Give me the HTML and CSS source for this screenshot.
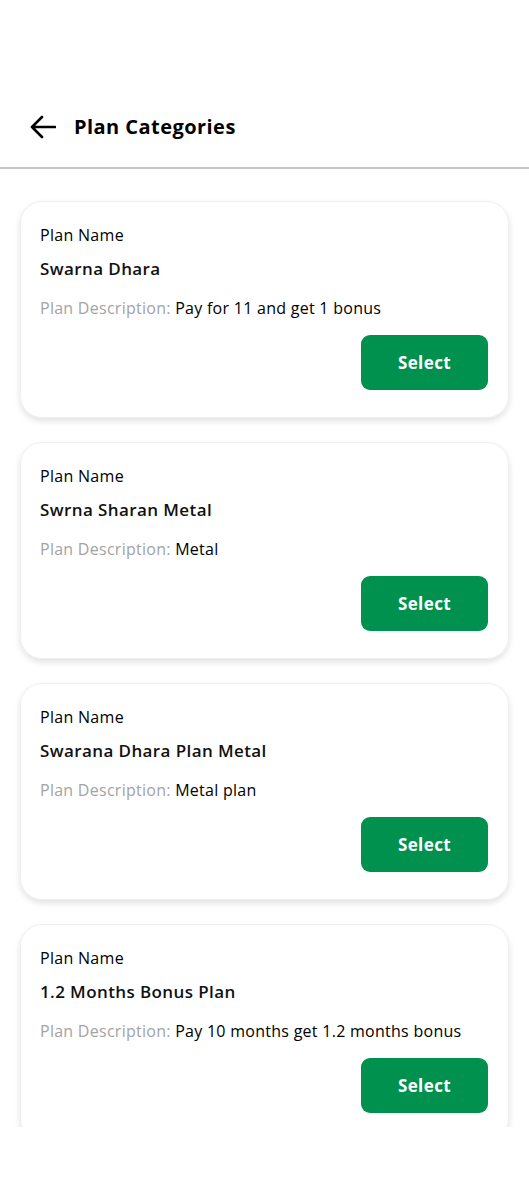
FILE: index.html
```html
<!DOCTYPE html>
<html>
<head>
<meta charset="utf-8">
<link rel="stylesheet" href="styles.css">
</head>
<body>
<div class="screen">
  <header class="header">
    <svg class="back" width="26" height="24" viewBox="0 0 26 24" fill="none" stroke="#000" stroke-width="2.6" stroke-linecap="round" stroke-linejoin="round">
      <path d="M25 12H2M12 2L2 12l10 10"/>
    </svg>
    <h1 class="title">Plan Categories</h1>
  </header>
  <main class="list">
    <div class="card">
      <div class="label">Plan Name</div>
      <div class="name">Swarna Dhara</div>
      <div class="desc"><span class="muted">Plan Description:</span> Pay for 11 and get 1 bonus</div>
      <div class="actions"><button class="btn">Select</button></div>
    </div>
    <div class="card">
      <div class="label">Plan Name</div>
      <div class="name">Swrna Sharan Metal</div>
      <div class="desc"><span class="muted">Plan Description:</span> Metal</div>
      <div class="actions"><button class="btn">Select</button></div>
    </div>
    <div class="card">
      <div class="label">Plan Name</div>
      <div class="name">Swarana Dhara Plan Metal</div>
      <div class="desc"><span class="muted">Plan Description:</span> Metal plan</div>
      <div class="actions"><button class="btn">Select</button></div>
    </div>
    <div class="card">
      <div class="label">Plan Name</div>
      <div class="name">1.2 Months Bonus Plan</div>
      <div class="desc"><span class="muted">Plan Description:</span> Pay 10 months get 1.2 months bonus</div>
      <div class="actions"><button class="btn">Select</button></div>
    </div>
  </main>
</div>
</body>
</html>
```
FILE: styles.css
```css
* { box-sizing: border-box; }
html, body { margin: 0; padding: 0; background: #fff; }
body { font-family: "Open Sans", "Noto Sans", sans-serif; color: #000; }
.screen { width: 529px; height: 1198px; }
.header {
  height: 169px;
  padding: 87px 0 0 30px;
  display: flex;
  align-items: flex-start;
  border-bottom: 2px solid #c6c6c6;
}
.header .back { margin-top: 28px; flex: none; }
.title {
  margin: 0 0 0 18px;
  height: 80px;
  line-height: 80px;
  font-size: 20px;
  font-weight: 700;
  letter-spacing: 0.45px;
}
.list {
  height: 958px;
  overflow: hidden;
  padding: 32px 20px 0 20px;
  display: flex;
  flex-direction: column;
  gap: 24px;
}
.card {
  flex: none;
  height: 217px;
  border-radius: 22px;
  border: 1px solid #efefef;
  box-shadow: 0 3px 6px rgba(0,0,0,0.12);
  padding: 21px 20px 0 19px;
  display: flex;
  flex-direction: column;
}
.label { font-size: 16px; line-height: 24px; letter-spacing: 0.3px; }
.name { font-size: 17px; line-height: 24px; font-weight: 600; margin-top: 10px; letter-spacing: 0.4px; color: #111; }
.desc { font-size: 16px; line-height: 24px; margin-top: 15px; letter-spacing: 0.27px; }
.muted { color: #a3a3a3; }
.actions { display: flex; justify-content: flex-end; margin-top: 15px; }
.btn {
  width: 127px;
  height: 55px;
  border: none;
  border-radius: 9px;
  background: #00914f;
  color: #fff;
  font-family: inherit;
  font-size: 17px;
  font-weight: 700;
  letter-spacing: 0.4px;
}
```
